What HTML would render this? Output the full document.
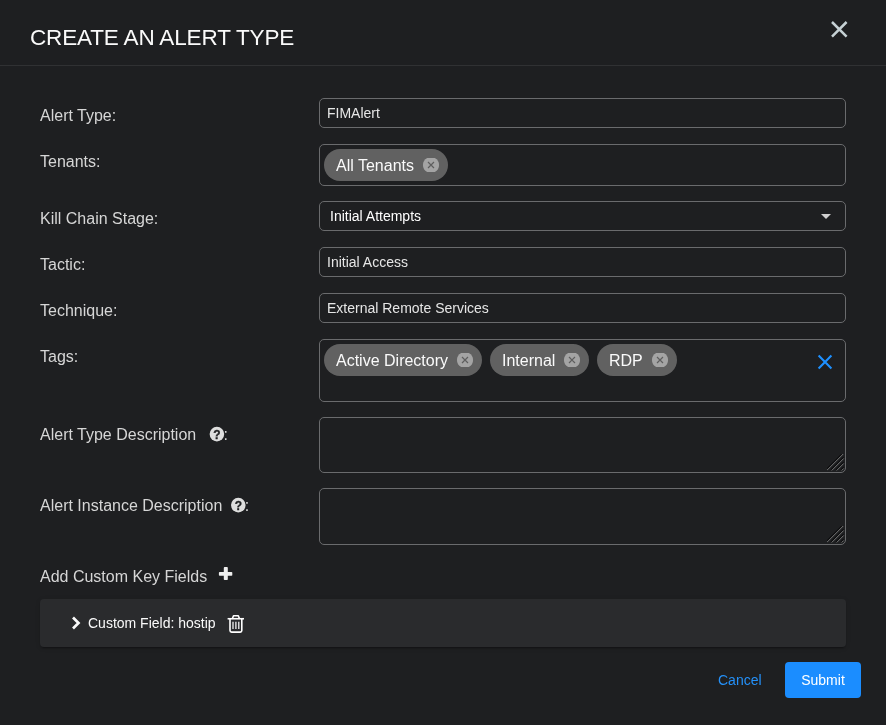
<!DOCTYPE html>
<html lang="en">
<head>
<meta charset="utf-8">
<title>Create an Alert Type</title>
<style>
*{box-sizing:border-box;margin:0;padding:0}
html,body{width:886px;height:725px;overflow:hidden;background:#1e1f21;font-family:"Liberation Sans",Arial,sans-serif;color:#d4d4d4}
#root{position:absolute;left:0;top:0;width:886px;height:725px;will-change:transform}
.abs{position:absolute}
#title{position:absolute;left:30px;top:24px;font-size:22.5px;letter-spacing:-0.15px;line-height:28px;color:#fafafa;font-weight:400;white-space:nowrap}
#hr{position:absolute;left:0;top:65px;width:886px;height:1px;background:#303133}
.lbl{position:absolute;left:40px;font-size:16px;line-height:20px;color:#d6d6d6;white-space:nowrap}
.box{position:absolute;left:319px;width:527px;border:1px solid #6a6b6d;border-radius:5px;background:#1e1f21}
.txt{font-size:14px;line-height:28px;padding-left:7px;color:#e6e6e6;white-space:nowrap}
.chip{position:absolute;height:32px;border-radius:16px;background:#616161;color:#fafafa;font-size:16px;line-height:34px;padding-left:12px;white-space:nowrap}
.chip svg{position:absolute;top:7px}
#panel{position:absolute;left:40px;top:599px;width:806px;height:48px;background:#2a2b2d;border-radius:4px;box-shadow:0 3px 1px -2px rgba(0,0,0,.2),0 2px 2px 0 rgba(0,0,0,.14),0 1px 5px 0 rgba(0,0,0,.12)}
#cancel{position:absolute;left:718px;top:670px;font-size:14px;line-height:20px;color:#2490f8}
#submit{position:absolute;left:785px;top:662px;width:76px;height:36px;border-radius:4px;background:#1b8dff;color:#fff;font-size:14px;line-height:36px;text-align:center}
</style>
</head>
<body>
<div id="root">
<div id="title">CREATE AN ALERT TYPE</div>
<svg class="abs" style="left:831px;top:21px;overflow:visible" width="17" height="17" viewBox="0 0 17 17"><path d="M1 1L15.6 15.6M15.6 1L1 15.6" stroke="#c6d1d5" stroke-width="2.5" fill="none"/></svg>
<div id="hr"></div>

<div class="lbl" style="top:106px">Alert Type:</div>
<div class="box" style="top:98px;height:30px"><div class="txt">FIMAlert</div></div>

<div class="lbl" style="top:152px">Tenants:</div>
<div class="box" style="top:144px;height:42px"></div>
<div class="chip" style="left:324px;top:149px;width:124px">All Tenants<svg style="left:98px" width="18" height="18" viewBox="0 0 18 18"><path fill="#a4a4a4" d="M5.2 1.9H12.8A8.05 8.05 0 0 1 12.8 16.1H5.2A8.05 8.05 0 0 1 5.2 1.9Z"/><path d="M6 6L12 12M12 6L6 12" stroke="#5e5e5e" stroke-width="1.15" fill="none"/></svg></div>

<div class="lbl" style="top:209px">Kill Chain Stage:</div>
<div class="box" style="top:201px;height:30px"><div class="txt" style="padding-left:10px;color:#fff">Initial Attempts</div>
<svg class="abs" style="left:501px;top:12px" width="10" height="5" viewBox="0 0 10 5"><path d="M0 0H10L5 5Z" fill="#d0d0d0"/></svg></div>

<div class="lbl" style="top:255px">Tactic:</div>
<div class="box" style="top:247px;height:30px"><div class="txt">Initial Access</div></div>

<div class="lbl" style="top:301px">Technique:</div>
<div class="box" style="top:293px;height:30px"><div class="txt">External Remote Services</div></div>

<div class="lbl" style="top:347px">Tags:</div>
<div class="box" style="top:339px;height:63px"></div>
<div class="chip" style="left:324px;top:344px;width:158px">Active Directory<svg style="left:132px" width="18" height="18" viewBox="0 0 18 18"><path fill="#a4a4a4" d="M5.2 1.9H12.8A8.05 8.05 0 0 1 12.8 16.1H5.2A8.05 8.05 0 0 1 5.2 1.9Z"/><path d="M6 6L12 12M12 6L6 12" stroke="#5e5e5e" stroke-width="1.15" fill="none"/></svg></div>
<div class="chip" style="left:490px;top:344px;width:99px">Internal<svg style="left:73px" width="18" height="18" viewBox="0 0 18 18"><path fill="#a4a4a4" d="M5.2 1.9H12.8A8.05 8.05 0 0 1 12.8 16.1H5.2A8.05 8.05 0 0 1 5.2 1.9Z"/><path d="M6 6L12 12M12 6L6 12" stroke="#5e5e5e" stroke-width="1.15" fill="none"/></svg></div>
<div class="chip" style="left:597px;top:344px;width:80px">RDP<svg style="left:54px" width="18" height="18" viewBox="0 0 18 18"><path fill="#a4a4a4" d="M5.2 1.9H12.8A8.05 8.05 0 0 1 12.8 16.1H5.2A8.05 8.05 0 0 1 5.2 1.9Z"/><path d="M6 6L12 12M12 6L6 12" stroke="#5e5e5e" stroke-width="1.15" fill="none"/></svg></div>
<svg class="abs" style="left:818px;top:355px;overflow:visible" width="14" height="14" viewBox="0 0 14 14"><path d="M0.6 0.6L13.4 13.4M13.4 0.6L0.6 13.4" stroke="#1e90ff" stroke-width="2.1" fill="none"/></svg>

<div class="lbl" style="top:425px">Alert Type Description</div>
<div class="lbl" style="left:223.5px;top:425px">:</div>
<svg class="abs" style="left:208px;top:426px" width="17" height="17" viewBox="0 0 17 17"><circle cx="8.9" cy="8.1" r="7.3" fill="#dedede"/><text x="8.9" y="12.5" text-anchor="middle" font-family="Liberation Sans, Arial, sans-serif" font-weight="bold" font-size="12" fill="#1e1f21" stroke="#1e1f21" stroke-width="0.3">?</text></svg>
<div class="box" style="top:417px;height:56px"><svg class="abs" style="right:0;bottom:0" width="18" height="18" viewBox="0 0 18 18"><g transform="translate(-0.8 -0.8)"><path d="M-0.2 16.6L17.3 -0.9M4.8 16.6L17.3 4.1M9.8 16.6L17.3 9.1M14.8 16.6L17.3 14.1" stroke="#0c0c0d" stroke-width="1.1" fill="none"/><path d="M0.5 17.3L17.5 0.3M5.5 17.3L17.5 5.3M10.5 17.3L17.5 10.3M15.5 17.3L17.5 15.3" stroke="#7a7a7a" stroke-width="0.95" fill="none"/></g></svg></div>

<div class="lbl" style="top:496px">Alert Instance Description</div>
<div class="lbl" style="left:244.7px;top:496px">:</div>
<svg class="abs" style="left:230px;top:497px" width="17" height="17" viewBox="0 0 17 17"><circle cx="8.3" cy="8.1" r="7.3" fill="#dedede"/><text x="8.3" y="12.5" text-anchor="middle" font-family="Liberation Sans, Arial, sans-serif" font-weight="bold" font-size="12" fill="#1e1f21" stroke="#1e1f21" stroke-width="0.3">?</text></svg>
<div class="box" style="top:488px;height:57px"><svg class="abs" style="right:0;bottom:0" width="18" height="18" viewBox="0 0 18 18"><g transform="translate(-0.8 -0.8)"><path d="M-0.2 16.6L17.3 -0.9M4.8 16.6L17.3 4.1M9.8 16.6L17.3 9.1M14.8 16.6L17.3 14.1" stroke="#0c0c0d" stroke-width="1.1" fill="none"/><path d="M0.5 17.3L17.5 0.3M5.5 17.3L17.5 5.3M10.5 17.3L17.5 10.3M15.5 17.3L17.5 15.3" stroke="#7a7a7a" stroke-width="0.95" fill="none"/></g></svg></div>

<div class="lbl" style="top:567px">Add Custom Key Fields</div>
<svg class="abs" style="left:218px;top:566px" width="16" height="16" viewBox="0 0 16 16"><rect x="5.8" y="1.1" width="4" height="13" rx="0.8" fill="#efefef"/><rect x="0.9" y="5.9" width="13.4" height="3.8" rx="0.8" fill="#efefef"/></svg>

<div id="panel"></div>
<svg class="abs" style="left:71px;top:616px;overflow:visible" width="9" height="14" viewBox="0 0 9 14"><path d="M2 1.5L7.5 7L2 12.5" stroke="#fafafa" stroke-width="2.7" fill="none"/></svg>
<div class="abs" style="left:88px;top:613px;font-size:14px;line-height:20px;color:#fafafa;white-space:nowrap">Custom Field: hostip</div>
<svg class="abs" style="left:226px;top:613px" width="20" height="22" viewBox="0 0 20 22"><g stroke="#fff" fill="none" stroke-linejoin="round"><path d="M1.6 5.75H18" stroke-width="1.6"/><path d="M6.3 5.7L7.5 2.8H12.3L13.5 5.7" stroke-width="1.6"/><path d="M4 5.7V17.5Q4 19.1 5.6 19.1H14.2Q15.8 19.1 15.8 17.5V5.7" stroke-width="1.6"/><path d="M7 8.8V15.9M9.9 8.8V15.9M12.8 8.8V15.9" stroke-width="1.2"/></g></svg>

<div id="cancel">Cancel</div>
<div id="submit">Submit</div>
</div>
</body>
</html>
